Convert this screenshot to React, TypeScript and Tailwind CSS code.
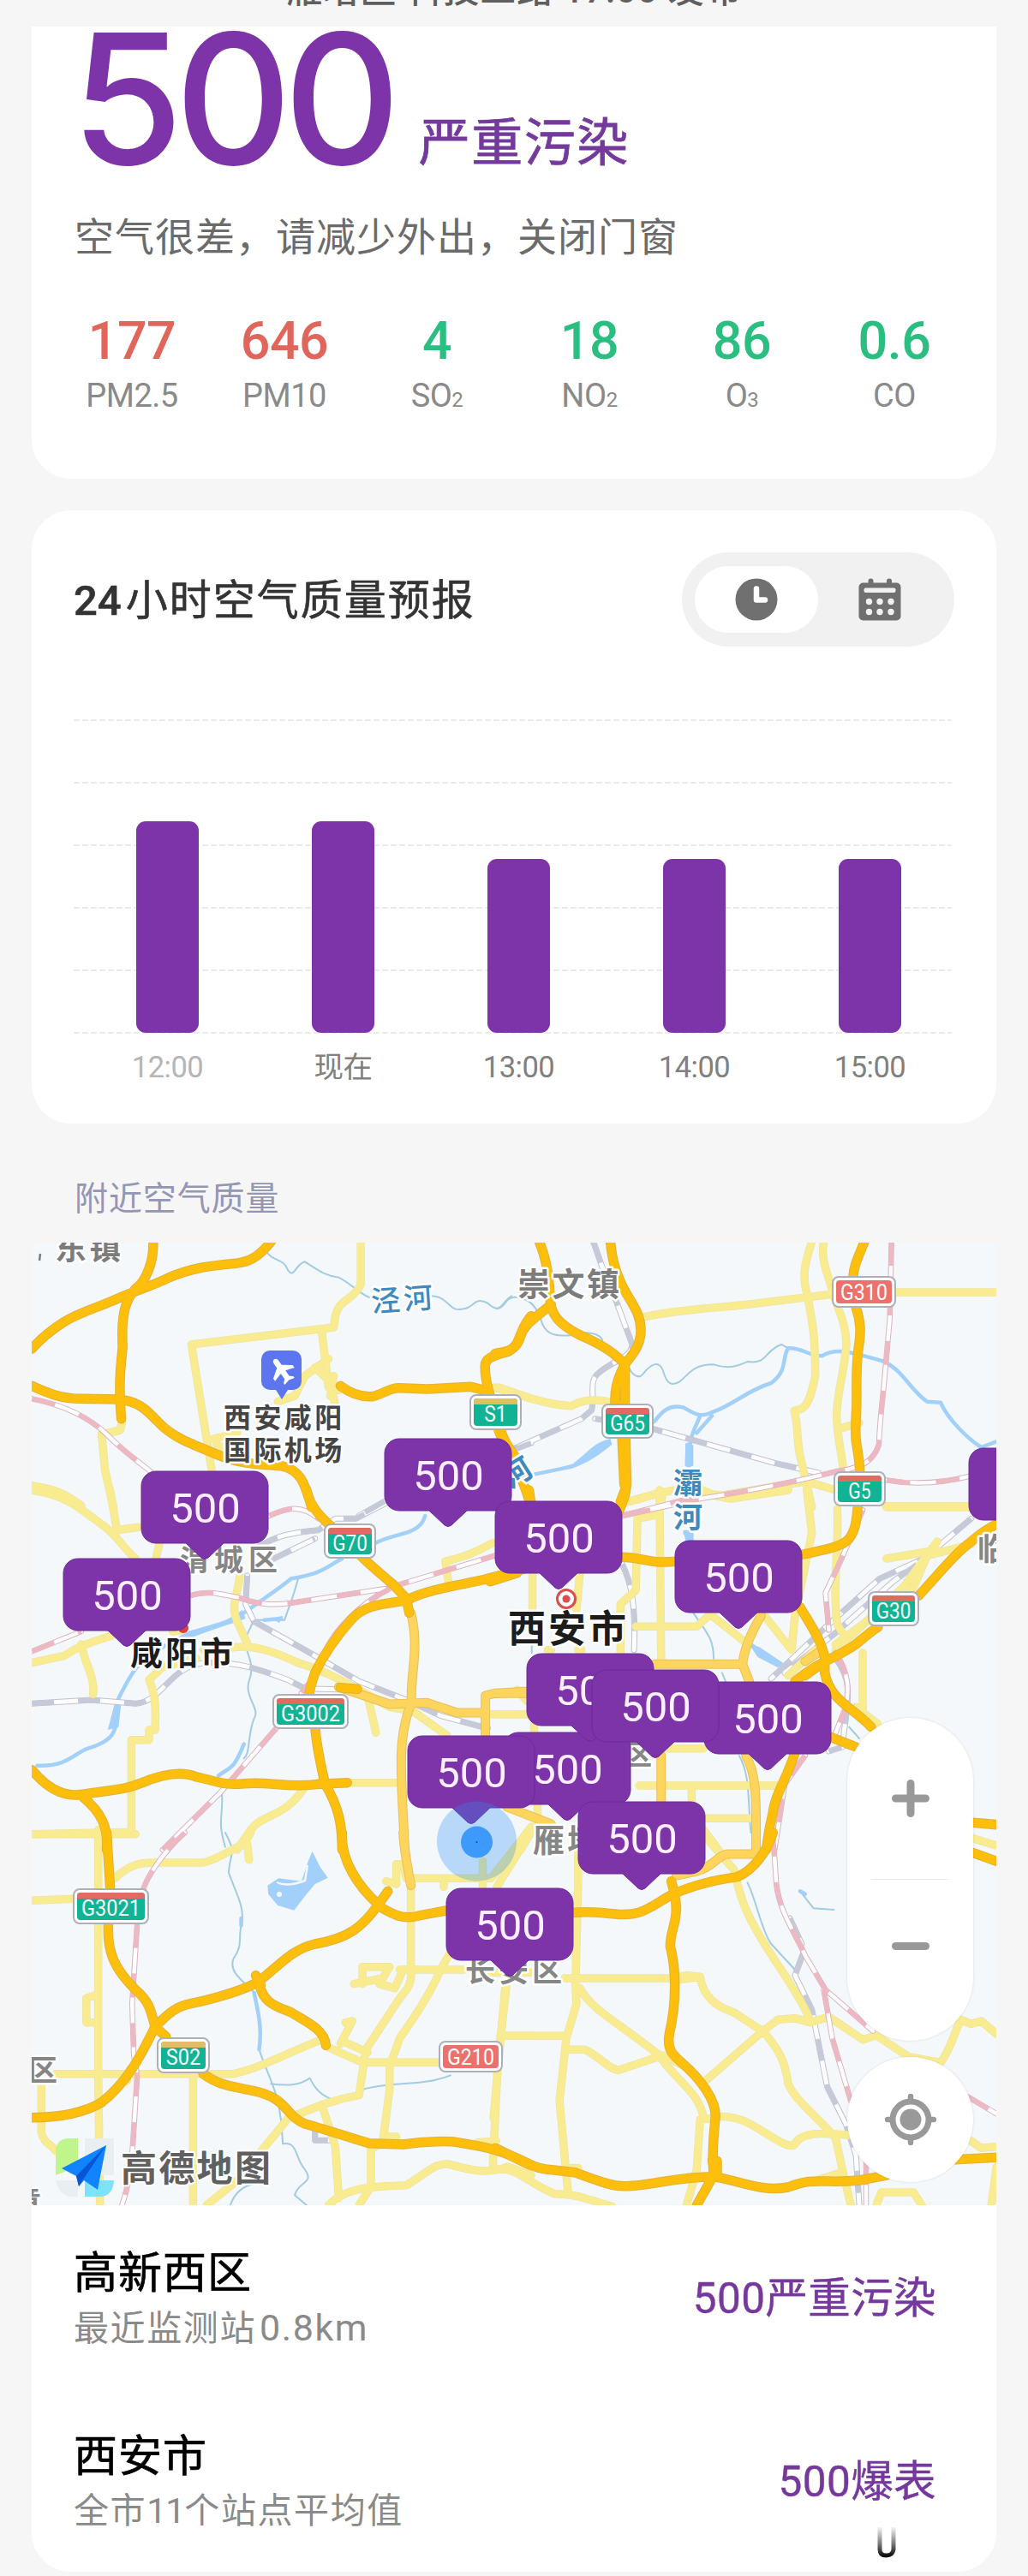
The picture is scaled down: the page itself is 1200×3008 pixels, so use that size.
import React from "react";

const pollutants = [
  { value: "177", label: "PM2.5", sub: "", tone: "text-[#e0665c]" },
  { value: "646", label: "PM10", sub: "", tone: "text-[#e0665c]" },
  { value: "4", label: "SO", sub: "2", tone: "text-[#2abf80]" },
  { value: "18", label: "NO", sub: "2", tone: "text-[#2abf80]" },
  { value: "86", label: "O", sub: "3", tone: "text-[#2abf80]" },
  { value: "0.6", label: "CO", sub: "", tone: "text-[#2abf80]" },
];

const hours = [
  { label: "12:00", bar: "h-[247px]", tone: "text-[#b5b5b5]" },
  { label: "现在", bar: "h-[247px]", tone: "text-[#808080]" },
  { label: "13:00", bar: "h-[203px]", tone: "text-[#808080]" },
  { label: "14:00", bar: "h-[203px]", tone: "text-[#808080]" },
  { label: "15:00", bar: "h-[203px]", tone: "text-[#808080]" },
];

type Tile = {
  at: string;
  river: string;
  water: string;
  stream: string;
  rail: string;
  pinkRail: string;
  yellow: string;
  amber: string;
  orange: string;
};

/* The map is stored as six tiles; each has its own local coordinates. */
const tiles: Tile[] = [
  {
    at: "translate(0 1340) scale(0.39541 0.33333)",
    river: "",
    water: "",
    stream:
      "M790 370C810 400 840 390 850 430C870 460 870 410 900 400C940 430 960 450 1000 455C1040 480 1060 510 1090 525M1270 520C1330 520 1320 580 1370 565C1400 560 1400 520 1440 545C1480 590 1480 540 1510 520",
    rail: "M1568 1035L1500 1065M1135 1240L1060 1290",
    pinkRail: "M94 880C180 900 260 940 320 1010C360 1060 420 1110 460 1150",
    yellow:
      "M1065 330V480C1040 540 1000 530 990 590L985 630L565 690L625 1130M950 645L970 840M1000 850L930 770M970 740L900 800L870 870L820 890M980 850L1000 960M985 800L975 870M360 960L355 990L300 1005L310 1130L335 1260M94 1185C160 1195 190 1210 240 1255M1460 840L1568 880M630 1020L700 1000M640 1040L720 1090",
    amber: "",
    orange:
      "M452 330C455 400 430 470 400 495C365 540 358 600 362 700C355 780 350 830 358 950M800 330C760 390 730 400 700 405C620 415 570 420 500 455C440 490 400 500 345 530C290 560 240 575 190 610C150 640 120 670 94 705M94 835C140 860 180 880 240 880L350 882C410 890 430 915 470 965C510 1015 560 1035 640 1075C700 1105 750 1110 830 1115C890 1130 900 1180 920 1260M1005 835C1040 865 1070 875 1100 872C1130 865 1150 840 1180 842L1260 846L1390 838L1430 850M1568 590C1530 640 1540 690 1500 715C1450 730 1430 740 1432 770C1432 810 1440 850 1470 950C1480 1020 1500 1050 1550 1130",
  },
  {
    at: "translate(580 1340) scale(0.39541 0.33333)",
    river:
      "M860 703C840 740 860 780 810 825C740 850 700 900 640 925C600 950 580 930 550 910C510 900 490 920 465 960M860 703C900 700 920 730 960 730C1000 700 1040 715 1140 748C1200 780 1220 850 1270 890L1310 893C1330 950 1390 1020 1430 1050L1475 1030M600 940C580 1000 568 1000 568 1115M562 1040V1112M220 1118L110 1145M590 1000L635 940",
    water: "M335 1020C290 1030 270 1065 225 1108L160 1130L220 1124C260 1110 300 1080 340 1040ZM557 1042H580V1115H555Z",
    stream:
      "M0 565C30 560 20 520 60 525C100 530 120 560 135 620C150 660 180 660 220 658C260 640 310 650 312 680M390 770C400 800 420 810 430 795C460 750 480 750 490 780C500 820 510 840 540 820C570 790 580 760 640 760C690 780 720 760 740 750C800 760 790 710 840 690L860 703",
    rail: "M285 330L310 415C350 520 370 600 400 690C395 740 350 740 300 790C270 820 290 860 280 920L250 950L50 1055M290 950L460 985L640 1045L820 1105L950 1140",
    pinkRail:
      "M1165 330L1160 600L1148 760C1140 880 1130 950 1128 1040C1110 1110 1060 1125 1000 1135C900 1165 760 1200 600 1230L370 1290M1150 1165C1220 1180 1300 1180 1400 1150",
    yellow:
      "M430 595C520 570 620 565 750 548L980 515L1040 507H1475M930 330C910 400 900 450 915 510C930 600 940 650 940 800C930 860 920 900 900 915L878 922C890 970 885 1030 895 1080L915 1180L930 1260M965 330C955 400 980 450 990 500C1010 580 1030 610 1032 690C1025 790 1005 850 1003 940C1005 1020 1020 1080 1024 1140M1010 985L1070 965M5 840C60 860 130 900 220 905C250 885 280 880 330 890M390 1240C480 1210 540 1190 600 1195C620 1210 650 1225 680 1215C760 1200 850 1180 915 1170L1000 1200M1150 1256H1400M488 1205L485 1260",
    amber: "",
    orange:
      "M160 550C110 600 80 620 70 660C60 715 20 715 -5 722M125 330C150 400 155 470 158 545C165 600 200 630 250 660C310 690 350 720 378 760L378 900M335 330C340 380 345 420 365 470C385 530 425 570 425 640C425 700 395 730 378 760C355 810 345 850 350 920L368 1010M378 900L383 1180C380 1230 365 1260 350 1300M365 900L376 1180M5 990C20 1040 70 1130 95 1235M1085 330C1065 390 1055 410 1052 450M1060 560C1075 610 1075 650 1068 700C1060 760 1062 820 1062 880C1062 940 1055 1000 1062 1040C1068 1080 1072 1110 1072 1150",
  },
  {
    at: "translate(0 1740) scale(0.39541 0.33333)",
    river:
      "M110 965C200 970 220 920 260 905C330 880 350 850 345 760L350 730C380 660 400 600 480 550L560 500C620 480 690 460 720 430C780 380 830 340 860 310C960 290 960 270 1010 240M1110 185C1160 150 1240 160 1255 90M720 890C690 980 680 970 645 1000M780 455L830 450",
    water: "M550 515C580 480 650 480 715 420L725 450C680 470 620 490 560 520ZM338 750L358 745L350 830L318 840ZM800 450L835 440L825 465Z",
    stream:
      "M880 310C870 360 850 420 840 455L750 455L720 530C740 600 750 620 735 670C720 720 770 770 750 800C730 860 740 920 720 940M655 1060C660 1150 640 1150 665 1250",
    rail: "M760 200C820 160 850 150 940 140L990 100L1050 100L1140 45M800 245L930 170M730 300L725 400L750 460L900 560L1060 670L1200 735L1300 790L1440 835M94 748L270 735L400 748C480 740 500 620 600 605C700 600 760 625 850 665L900 695L1000 698",
    pinkRail:
      "M94 565L240 495M560 370C620 350 650 365 700 375C760 400 800 405 860 395L1140 345L1460 230M795 90C850 60 890 50 940 100M1150 345C1060 400 980 500 960 570M910 680L890 710M815 835L650 1060L480 1260",
    yellow:
      "M94 0C200 20 230 60 300 120C350 160 360 200 400 240M325 0L345 140L410 130M470 190L460 240M708 300C700 380 680 400 700 460L735 550M94 605L190 580C240 540 280 530 330 510M240 540C250 610 280 650 275 715M580 590L480 620L440 665C460 720 460 760 458 840L440 840V875L388 875V1198L94 1205M510 495L540 490M600 560L700 550C750 545 800 560 880 605C980 640 1060 700 1150 760L1220 775L1320 860M1085 720L1110 850M940 1025L1175 1025M900 1040C840 1150 780 1130 740 1190L700 1260M1455 185C1400 220 1380 230 1315 250L1325 330M290 1190V1260M1450 785H1568",
    amber: "M1213 430C1240 560 1210 640 1215 745C1170 870 1185 1000 1195 1260M1000 690L1150 750L1260 745L1350 780L1430 780M1433 860V720L1460 712H1568",
    orange:
      "M905 0C915 60 950 100 1000 150C1060 230 1110 280 1160 330L1200 380L1208 430M1208 385C1130 400 1080 400 1040 450C980 530 950 590 930 640C915 690 910 720 912 740M1200 385C1280 340 1380 330 1440 310L1568 270M930 830C935 900 950 980 960 1030C1000 1110 1010 1170 1010 1260M1005 692L1055 697M94 980C150 1060 200 1075 250 1065C330 1050 370 1050 420 1025C490 990 540 985 580 1005C640 1020 660 1035 720 1028C800 1020 850 1045 940 1030L1025 1025M245 1075C300 1130 320 1180 315 1260",
  },
  {
    at: "translate(580 1740) scale(0.39541 0.33333)",
    river: "M555 150H575V180M640 450L840 615",
    water: "M745 540L775 550L845 605L830 622L770 585ZM550 140H578L572 182H558Z",
    stream: "M580 430C620 500 640 520 640 590M665 640L675 670M715 930C750 1000 740 1100 750 1200M103 540V570M1040 830L1070 870",
    rail: "M370 260C400 330 410 420 405 560M1400 100L1260 240L1130 310L980 470L810 660M1240 260L1170 320L1000 500L850 640M1000 590C1060 680 1030 760 1020 900L980 915",
    pinkRail:
      "M1080 70L1010 260L970 360L980 490M1000 570C1040 640 1040 700 1030 760L1000 850M910 930L850 1030L820 1260M370 90L600 20",
    yellow:
      "M480 0L485 600M410 350L415 100L480 85M105 290V420M245 290L235 420M410 350L365 400V570M410 478H590L630 435L730 530M790 440L870 560L880 440L930 150L915 0M1005 65C1010 200 990 350 1005 470L1030 520M1000 540L1230 340L1270 230L1400 190M1300 180L1200 340L1000 560M1080 570V770M1060 760L1125 820M940 560L860 650M0 785H90M110 820V850M420 1035H830M500 905H610M575 1040V1090M610 1150H750M110 1180L70 1260M120 1100V1180M610 1190L660 1270M1150 60H1400M390 40L480 10M600 10L690 30L860 0M1150 240L1300 210M60 700L90 740M150 560H160M240 560H250",
    amber: "M0 712L90 705M465 610H725C730 560 750 500 780 440M725 610L745 670M485 930V1100M735 930C770 1000 765 1100 765 1260M30 1110L160 1170M910 600L960 560",
    orange:
      "M-20 320L60 290M370 235C430 235 450 260 530 250M905 225C960 210 1020 200 1040 170C1060 140 1062 100 1065 60M895 410C930 480 960 530 968 590V640C985 740 1050 760 1105 830M985 865L1060 900M880 670C950 600 1000 590 1060 540C1100 500 1110 490 1125 480M910 650L968 600M1245 370C1300 300 1340 240 1380 200C1420 160 1440 140 1475 120M880 920C860 1000 820 1070 815 1130C800 1200 800 1230 795 1260M378 0L365 40M95 0L100 40M1405 1165L1475 1172",
  },
  {
    at: "translate(0 2140) scale(0.39541 0.33333)",
    river: "M750 560C760 620 775 680 765 760M712 300V325",
    water:
      "M922 65L945 120L968 158L930 180L905 215L868 272L820 255L792 215L790 185L822 160L890 170L910 100Z",
    stream:
      "M665 0C700 80 680 60 675 140C700 220 720 260 715 310C700 370 720 390 690 440C670 490 730 530 750 560M765 760C790 850 820 900 830 1010L835 1090C880 1080 870 1140 900 1180C930 1230 880 1220 870 1270L905 1305M800 880C860 890 890 880 915 860C930 900 950 920 980 935M1070 900C1150 870 1250 890 1330 850M680 1305C690 1270 710 1240 750 1230",
    rail: "M930 1045V1078H970",
    pinkRail: "M545 0C480 70 430 160 420 210M405 320L390 600L395 780L405 850L395 1040C390 1140 385 1220 360 1305",
    yellow:
      "M94 5H400M290 0V840L295 1305M340 160C380 110 420 105 450 105H600C650 90 680 60 720 40L740 0M730 40L735 95M94 238L215 232M280 570L255 580V665H280M165 845H690C780 820 850 770 950 725M375 850V870M570 850V1305M122 890V1050C130 1090 150 1090 165 1115M965 750L1070 805H1300M1005 740L1040 660L1020 665M1020 735L1085 770M1213 190V480C1220 540 1190 560 1180 580L1080 760L1060 920C960 940 900 980 850 1000C800 1080 760 1120 740 1180L610 1305M1340 400L1300 480C1280 540 1240 620 1180 720L1150 820V900L1130 1085L1095 1110V1240L1060 1305M1180 480H1370M1070 530V470H1150L1130 510L1045 530M1190 480L1165 545L1120 530M955 970L990 1100L1000 1280M970 1305C1020 1240 1100 1240 1200 1235C1250 1200 1280 1160 1320 1160C1380 1180 1440 1200 1500 1170L1568 1200M1495 540L1470 800L1455 1165M1480 712H1568M1140 170L1170 180V110H1190L1200 160M1213 160H1450L1568 -20M1425 100V190M1310 160V190M1140 1065H1170M1410 1085L1465 1080M1440 490H1568",
    amber: "M1190 0C1195 80 1205 130 1213 185",
    orange:
      "M1010 0C1005 100 1060 190 1115 250M315 0L325 190M320 320C315 420 340 480 400 550C440 590 445 620 458 680C500 630 520 610 560 600C640 580 700 560 760 525C830 460 860 410 930 390C1030 370 1070 330 1115 255L1145 205M1115 255C1150 280 1190 310 1240 290L1330 270M765 525C775 600 820 610 860 630C900 660 960 690 962 745M94 998C180 998 250 980 300 945C380 870 420 770 458 680L490 715M600 845C650 890 700 890 750 905C850 930 840 990 900 1020C960 1040 1040 1070 1090 1088L1190 1092C1260 1080 1330 1080 1350 1085C1430 1100 1480 1110 1570 1165M755 500L770 535",
  },
  {
    at: "translate(580 2140) scale(0.39541 0.33333)",
    river: "M895 205L910 215",
    water: "",
    stream: "M740 175C770 250 780 340 810 390L880 480M895 205L935 265L995 270",
    rail: "M865 300L900 390M905 420L880 500L930 620L975 890L1030 1020L1060 1130L1070 1305",
    pinkRail: "M815 0L825 180C835 280 880 350 910 430L970 550L1110 695M965 550L990 720L1045 940M1390 925L1475 985M1090 1150V1305",
    yellow:
      "M240 0V180L232 530L235 600L205 720L185 940L210 1260M0 1180C60 1170 80 1220 170 1265C240 1265 280 1290 340 1310M200 510H520L560 500L600 505C610 580 650 610 700 630L790 700C830 760 850 790 860 880C880 940 960 1010 1000 1070L1020 1180L1045 1305M245 545C280 620 340 650 480 780C520 860 600 910 610 1000M620 865L780 700L830 655L880 650L925 665L980 645L1080 725L1120 710L1215 785L1310 805C1340 760 1350 700 1370 655L1400 670L1430 660L1475 705M205 760H260C300 780 330 830 360 832L490 780L550 815M10 712H205M25 540L-10 1000M620 20L700 130C720 230 730 270 780 370C830 470 890 560 920 645M650 995C720 990 760 1030 790 1050C830 1080 870 1110 880 1090C900 1050 950 1050 1040 1060M650 1000L600 1005L590 1180L560 1305M1400 1080L1430 1105L1475 1100M1120 1305L1135 1260H1230L1255 1305M1475 1170L1460 1305M0 190L100 0M1405 20L1475 45M215 1175H240M950 1215L1020 1190M540 515L600 505",
    amber: "M765 0V75H680C650 80 640 120 590 135L530 150",
    orange:
      "M815 0C800 60 760 130 710 155C620 170 570 190 520 215C450 260 430 295 350 285C300 280 270 275 230 280M515 170L525 215C540 310 510 340 512 400C530 480 530 600 510 700C500 760 520 780 545 805C600 860 650 940 645 1000C640 1060 635 1120 640 1200L590 1305M636 1145L642 1195M650 1150V1200M-5 1105C60 1140 90 1170 150 1180L230 1190C300 1220 340 1240 380 1238C450 1240 520 1205 640 1205C720 1220 780 1260 860 1242C940 1205 960 1230 1070 1218L1150 1200M1350 1145L1475 1138M1405 70L1475 100",
  },
];

function Roads({ layer, color, width, dash }: { layer: keyof Tile; color: string; width: number; dash?: string }) {
  return (
    <g fill="none" stroke={color} strokeWidth={width} strokeDasharray={dash} strokeLinejoin="round" strokeLinecap={dash ? "butt" : "round"}>
      {tiles.map((t) => (
        <g key={t.at} transform={t.at}>
          <path d={t[layer]} vectorEffect="non-scaling-stroke" />
        </g>
      ))}
    </g>
  );
}

const shields = [
  { x: 548, y: 1628, w: 61, h: 42, text: "S1", kind: "s" },
  { x: 702, y: 1639, w: 61, h: 41, text: "G65", kind: "g" },
  { x: 971, y: 1490, w: 75, h: 37, text: "G310", kind: "n" },
  { x: 973, y: 1718, w: 61, h: 41, text: "G5", kind: "g" },
  { x: 378, y: 1779, w: 61, h: 41, text: "G70", kind: "g" },
  { x: 318, y: 1978, w: 89, h: 41, text: "G3002", kind: "g" },
  { x: 1013, y: 1858, w: 60, h: 41, text: "G30", kind: "g" },
  { x: 85, y: 2205, w: 89, h: 42, text: "G3021", kind: "g" },
  { x: 183, y: 2379, w: 62, h: 42, text: "S02", kind: "s" },
  { x: 512, y: 2383, w: 75, h: 37, text: "G210", kind: "n" },
];

function Shield({ x, y, w, h, text, kind }: { x: number; y: number; w: number; h: number; text: string; kind: string }) {
  const national = kind === "n";
  return (
    <g transform={`translate(${x} ${y})`}>
      <rect x="1" y="1" width={w - 2} height={h - 2} rx="7" fill="#fff" stroke="#adb0b8" strokeWidth="2" />
      <rect x="5" y="5" width={w - 10} height={h - 10} rx="4" fill={national ? "#ee706c" : "#12b295"} />
      {!national && <path d={`M5 12V9a4 4 0 0 1 4-4H${w - 9}a4 4 0 0 1 4 4V12Z`} fill={kind === "s" ? "#dcc062" : "#e06b62"} />}
      <text
        x={w / 2}
        y={national ? 27.5 : 32}
        textAnchor="middle"
        textLength={text.length * 14.2 - 2}
        lengthAdjust="spacingAndGlyphs"
        fontSize="25"
        fill="#f2fffb"
      >
        {text}
      </text>
    </g>
  );
}

const places = [
  { x: 64, y: 1471, size: 37, gap: 3, text: "东镇", fill: "#7c7c7c" },
  { x: 604, y: 1513, size: 38, gap: 2.5, text: "崇文镇", fill: "#7c7c7c" },
  { x: 261, y: 1667, size: 32, gap: 3.4, text: "西安咸阳", fill: "#454545" },
  { x: 261, y: 1705, size: 32, gap: 3.4, text: "国际机场", fill: "#454545" },
  { x: 210, y: 1834, size: 34, gap: 6, text: "渭城区", fill: "#868686" },
  { x: 152, y: 1944, size: 38, gap: 3, text: "咸阳市", fill: "#1c1c1c" },
  { x: 593, y: 1918, size: 44, gap: 3, text: "西安市", fill: "#1c1c1c" },
  { x: 1141, y: 1822, size: 36, gap: 3, text: "临潼区", fill: "#868686" },
  { x: 729, y: 2060, size: 32, gap: 3, text: "区", fill: "#868686" },
  { x: 622, y: 2163, size: 37, gap: 3, text: "雁塔区", fill: "#868686" },
  { x: 543, y: 2314, size: 35, gap: 4, text: "长安区", fill: "#868686" },
  { x: 33, y: 2430, size: 34, gap: 3, text: "区", fill: "#868686" },
  { x: 14, y: 2583, size: 34, gap: 3, text: "章", fill: "#868686" },
  { x: 786, y: 1744, size: 34, gap: 0, text: "灞", fill: "#3f8abd" },
  { x: 786, y: 1784, size: 34, gap: 0, text: "河", fill: "#3f8abd" },
];

const pins = [
  [165, 1718],
  [449, 1680],
  [578, 1753],
  [74, 1820],
  [788, 1799],
  [588, 2023],
  [476, 2027],
  [822, 1964],
  [615, 1931],
  [691, 1950],
  [675, 2104],
  [521, 2205],
  [1131, 1691],
];

function Pin({ x, y }: { x: number; y: number }) {
  return (
    <g transform={`translate(${x} ${y})`}>
      <path
        d="M17 0H131A17 17 0 0 1 148 17V67A17 17 0 0 1 131 84H96L78 101Q74 104 70 101L52 84H17A17 17 0 0 1 0 67V17A17 17 0 0 1 17 0Z"
        fill="#7d34a8"
        stroke="#6a2a9a"
        strokeWidth="1"
      />
      <text x="74.5" y="59.5" textAnchor="middle" fontSize="49" fill="#fdefff">
        500
      </text>
    </g>
  );
}

function MapView() {
  return (
    <svg className="block h-full w-full" viewBox="37 1451 1126 1124">
      <rect x="37" y="1451" width="1126" height="1124" fill="#f4f8fb" />
      <Roads layer="stream" color="#a3cbe2" width={2} />
      <Roads layer="river" color="#a2d0f8" width={4.5} />
      {tiles.map((t) => (
        <path key={t.at} transform={t.at} d={t.water} fill="#a2d0fa" />
      ))}
      <path d="M323 2198Q335 2204 356 2196L359 2178" fill="none" stroke="#f4f8fb" strokeWidth="2.5" />
      <circle cx="326" cy="2212" r="3" fill="#f4f8fb" />

      <Roads layer="rail" color="#bfc2cf" width={7} />
      <Roads layer="rail" color="#fdfdfe" width={5} />
      <Roads layer="rail" color="#c6c9d8" width={6} dash="26 28" />
      <Roads layer="yellow" color="#eee3a0" width={9.5} />
      <Roads layer="yellow" color="#f9ec90" width={8} />
      <Roads layer="pinkRail" color="#d8b4bf" width={6.5} />
      <Roads layer="pinkRail" color="#fffdfe" width={4.5} />
      <Roads layer="pinkRail" color="#edb8c2" width={5.5} dash="28 30" />
      <Roads layer="amber" color="#e8c05a" width={11} />
      <Roads layer="amber" color="#fdd55c" width={9} />
      <Roads layer="orange" color="#e0b23a" width={11.5} />
      <Roads layer="orange" color="#fdbf0c" width={9.5} />

      <g stroke="#fff" strokeWidth="5" strokeLinejoin="round" paintOrder="stroke">
        {places.map((p) => (
          <text key={`${p.x}-${p.y}`} x={p.x} y={p.y} fontSize={p.size} letterSpacing={p.gap} fill={p.fill} className="font-bold">
            {p.text}
          </text>
        ))}
        <text x="434" y="1532" fontSize="34" letterSpacing="4" fill="#3f8abd" transform="rotate(-4 434 1532)" className="font-medium">
          泾河
        </text>
        <text x="588" y="1732" fontSize="34" fill="#3f8abd" transform="rotate(-32 604 1722)" className="font-bold">
          河
        </text>
      </g>
      <path d="M47 1464L46 1472" stroke="#7c7c7c" strokeWidth="2.5" />

      {shields.map((s) => (
        <Shield key={s.text} {...s} />
      ))}

      <circle cx="214" cy="1901" r="6" fill="#e0403c" />
      <g fill="none" stroke="#d94f4c">
        <circle cx="661" cy="1867" r="10.5" strokeWidth="3" fill="#fff" />
        <circle cx="661" cy="1867" r="4.5" fill="#d94f4c" stroke="none" />
      </g>

      <path d="M315 1577H342A10 10 0 0 1 352 1587V1613A10 10 0 0 1 342 1623H336L329 1634L322 1623H315A10 10 0 0 1 305 1613V1587A10 10 0 0 1 315 1577Z" fill="#5b76ee" />
      <path
        d="M21 16v-2.500l-7-5V4c0-1.200-.9-2.400-2.200-2.400S9.600 2.800 9.600 4v4.500l-7 5V16l7-2.300V19l-2.400 1.900V22.600l4.600-1.200 4.600 1.200v-1.700L14 19v-5.300z"
        fill="#fff"
        transform="translate(329 1600) rotate(-35) scale(1.5) translate(-11.8 -12)"
      />

      {pins.map(([x, y]) => (
        <Pin key={`${x}-${y}`} x={x} y={y} />
      ))}

      <circle cx="556.5" cy="2150" r="46.5" fill="#2f8ff5" fillOpacity="0.3" />
      <circle cx="556.5" cy="2151" r="18.5" fill="#3d99fb" />
      <circle cx="556.5" cy="2151" r="1" fill="#174a80" />

      <path d="M65 2510Q67 2498 78 2497H91V2530L65 2540Z" fill="#bff58b" />
      <path d="M99 2497H133V2540H99Z" fill="#e9eff0" />
      <path d="M65 2546H91V2565Q70 2568 65 2546Z" fill="#e9eff0" />
      <path d="M99 2546H133Q132 2565 116 2565H99Z" fill="#7fe2fb" />
      <path d="M124 2505L72 2532L89 2541L92 2553L98 2546L114 2557Z" fill="#0f84fd" />
      <path d="M124 2505L89 2541L92 2553L97 2545Z" fill="#0a55d6" />
      <g className="font-bold" stroke="#fff" strokeWidth="4" strokeLinejoin="round" paintOrder="stroke">
        <text x="141" y="2547" fontSize="42" letterSpacing="2.3" fill="#606060">
          高德地图
        </text>
      </g>
    </svg>
  );
}

function MapControls() {
  return (
    <div className="absolute top-[555px] right-[27px] flex flex-col gap-[19px]">
      <div className="flex h-[377px] w-[147px] flex-col items-center rounded-full bg-white shadow-[0_0_3px_rgba(0,0,0,0.12)]">
        <div className="flex h-[188px] items-center justify-center">
          <svg className="h-[46px] w-[46px]" viewBox="0 0 46 46" stroke="#999" strokeWidth="9" strokeLinecap="round">
            <path d="M5.5 23H40.5M23 5.5V40.5" />
          </svg>
        </div>
        <div className="h-px w-[91px] bg-[#e9e9e9]" />
        <div className="flex h-[154px] w-full items-center justify-center">
          <div className="h-[9px] w-[44px] rounded-full bg-[#999]" />
        </div>
      </div>
      <div className="flex h-[146px] w-[147px] items-center justify-center rounded-full bg-white shadow-[0_0_3px_rgba(0,0,0,0.12)]">
        <svg className="h-[60px] w-[60px]" viewBox="0 0 60 60" fill="none" stroke="#999">
          <circle cx="30" cy="30" r="21" strokeWidth="7" />
          <circle cx="30" cy="30" r="12.5" fill="#999" stroke="none" />
          <path d="M30 3V8M30 52V57M3 30H8M52 30H57" strokeWidth="6.5" strokeLinecap="round" />
        </svg>
      </div>
    </div>
  );
}

function Station({ name, note, value }: { name: string; note: React.ReactNode; value: string }) {
  return (
    <div className="flex h-[214px] items-center justify-between">
      <div>
        <div className="text-[51px] leading-[62px] tracking-[1px] text-black [-webkit-text-stroke:0.7px_currentColor]">{name}</div>
        <div className="text-[41px] leading-[64px] tracking-[1.6px] text-[#8a8a8a]">{note}</div>
      </div>
      <div className="pb-[6px] text-[49.5px] leading-[60px] tracking-[0.4px] text-[#76389c] [-webkit-text-stroke:0.4px_currentColor]">{value}</div>
    </div>
  );
}

export default function App() {
  return (
    <div className="h-[3008px] w-[1200px] overflow-hidden bg-[#f6f6f6] px-[37px] font-['Roboto','Noto_Sans_CJK_SC',sans-serif]" lang="zh-CN">
      <header className="flex h-[31px] items-end justify-center overflow-hidden">
        <div className="mb-[14px] text-[42px] leading-[56px] font-medium tracking-[0.9px] whitespace-nowrap text-[#5f5f5f]">雁塔区 科技二路 17:00 发布</div>
      </header>

      <section className="h-[528px] rounded-b-[46px] bg-white">
        <div className="flex h-[186px] items-end pl-[46px] text-[#7d34a8]">
          <div className="pb-[9px] font-['Inter'] text-[212px] leading-[186px] font-medium tracking-[-10px]">500</div>
          <div className="pb-[5px] pl-[31px] text-[60px] leading-[88px] tracking-[1.5px] text-[#743a9b] [-webkit-text-stroke:0.8px_currentColor]">严重污染</div>
        </div>
        <p className="mt-[30px] pl-[50px] text-[46px] leading-[60px] tracking-[1px] text-[#6b6b6b]">空气很差，请减少外出，关闭门窗</p>
        <div className="mt-[57px] grid w-[1096px] grid-cols-6 pl-[28px] text-center">
          {pollutants.map((p) => (
            <div key={p.label + p.value}>
              <div className={`text-[61px] leading-[68px] font-medium tracking-[-0.5px] ${p.tone}`}>{p.value}</div>
              <div className="text-[38px] leading-[60px] tracking-[-0.5px] text-[#8a8a8a]">
                {p.label}
                {p.sub && <span className="text-[24px]">{p.sub}</span>}
              </div>
            </div>
          ))}
        </div>
      </section>

      <section className="mt-[37px] h-[716px] rounded-[46px] bg-white px-[49px] pt-[49px]">
        <div className="flex items-center justify-between">
          <h2 className="pt-[3px] text-[49px] tracking-[2px] text-[#333] [-webkit-text-stroke:0.6px_currentColor]">
            <span className="mr-[5px] font-medium tracking-[0px]">24</span>小时空气质量预报
          </h2>
          <div className="flex h-[110px] w-[318px] items-center rounded-full bg-[#f1f1f1] pl-[15px]">
            <div className="flex h-[78px] w-[144px] items-center justify-center rounded-full bg-white">
              <svg className="h-[50px] w-[50px]" viewBox="0 0 50 50">
                <circle cx="25" cy="25" r="24.5" fill="#707070" />
                <path d="M25 12.5V25.5H35" fill="none" stroke="#fff" strokeWidth="6.5" strokeLinecap="round" strokeLinejoin="round" />
              </svg>
            </div>
            <svg className="ml-[47px] h-[50px] w-[50px]" viewBox="0 0 50 50">
              <path d="M14.5 3.5V10M36 3.5V10" stroke="#707070" strokeWidth="6" strokeLinecap="round" />
              <rect x="0.5" y="5.5" width="49" height="44" rx="5" fill="#707070" />
              <rect x="6.5" y="11.5" width="37" height="5.5" rx="2" fill="#f1f1f1" />
              {[12.5, 25, 38].map((x) => (
                <g key={x} fill="#f1f1f1">
                  <circle cx={x} cy="27.5" r="3.7" />
                  <circle cx={x} cy="39.5" r="3.7" />
                </g>
              ))}
            </svg>
          </div>
        </div>
        <div className="relative mt-[85px] h-[367px] w-[1025px]">
          <div className="flex h-full flex-col justify-between">
            {[0, 1, 2, 3, 4, 5].map((i) => (
              <div key={i} className="h-[2px] bg-[repeating-linear-gradient(90deg,#eaeaea_0_7px,transparent_7px_10px)]" />
            ))}
          </div>
          <div className="absolute bottom-[1px] left-[7px] grid w-[1025px] grid-cols-5 items-end justify-items-center">
            {hours.map((h) => (
              <div key={h.label} className={`w-[73px] rounded-[11px] bg-[#7d34a8] ${h.bar}`} />
            ))}
          </div>
        </div>
        <div className="mt-[15px] ml-[7px] grid w-[1025px] grid-cols-5 text-center text-[34.5px] leading-[48px] tracking-[-0.5px]">
          {hours.map((h) => (
            <div key={h.label} className={h.tone}>
              {h.label}
            </div>
          ))}
        </div>
      </section>

      <div className="flex h-[139px] items-center pt-[38px] pl-[50px] text-[39px] tracking-[0.9px] text-[#9497b3]">附近空气质量</div>

      <section className="relative h-[1124px] overflow-hidden">
        <MapView />
        <MapControls />
      </section>

      <section className="relative h-[428px] rounded-b-[46px] bg-white pt-[5px] pr-[70px] pl-[49px]">
        <Station name="高新西区" note={<>最近监测站<span className="ml-[4px] text-[43px]">0.8km</span></>} value="500严重污染" />
        <Station name="西安市" note={<>全市<span className="tracking-[-1px]">11</span>个站点平均值</>} value="500爆表" />
        <svg className="absolute right-[113px] bottom-[15px] h-[40px] w-[30px]" viewBox="0 0 30 40">
          <defs>
            <linearGradient id="mark" x1="0" y1="0" x2="0" y2="1">
              <stop offset="0" stopColor="#333" stopOpacity="0.05" />
              <stop offset="1" stopColor="#111" />
            </linearGradient>
          </defs>
          <path d="M7 3V29Q7 36 14.500 36T23 29V3" fill="none" stroke="url(#mark)" strokeWidth="5" />
        </svg>
      </section>
    </div>
  );
}
